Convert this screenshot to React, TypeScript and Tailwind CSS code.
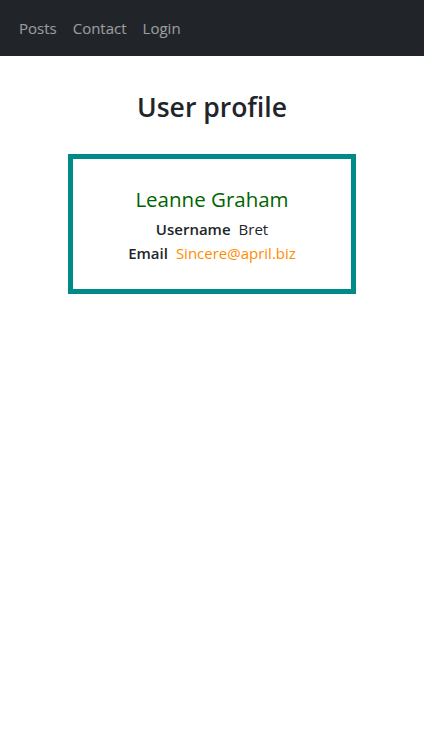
export default function App() {
  return (
    <div className="min-h-[730px] bg-white font-['Open_Sans',sans-serif] text-[#212529]">
      {/* Navbar */}
      <nav className="h-14 bg-[#212529] flex items-center px-[11px]">
        <a href="#" className="px-2 text-[15px] text-white/55">Posts</a>
        <a href="#" className="px-2 text-[15px] text-white/55">Contact</a>
        <a href="#" className="px-2 text-[15px] text-white/55">Login</a>
      </nav>

      <div className="flex flex-col items-center">
        <h1 className="mt-[33px] text-[26.5px] font-semibold leading-[36px]">User profile</h1>

        {/* Card */}
        <div className="mt-[29px] w-[288px] h-[140px] border-[5px] border-[#008b8b] flex flex-col items-center pt-[26px]">
          <h5 className="text-[20.5px] font-medium leading-7 text-[#006400]">Leanne Graham</h5>
          <div className="mt-[4px] text-[15px] leading-6">
            <span className="font-semibold">Username</span>
            <span className="ml-2">Bret</span>
          </div>
          <div className="text-[15px] leading-6">
            <span className="font-semibold">Email</span>
            <span className="ml-2 text-[#ff8c00]">Sincere@april.biz</span>
          </div>
        </div>
      </div>
    </div>
  );
}
